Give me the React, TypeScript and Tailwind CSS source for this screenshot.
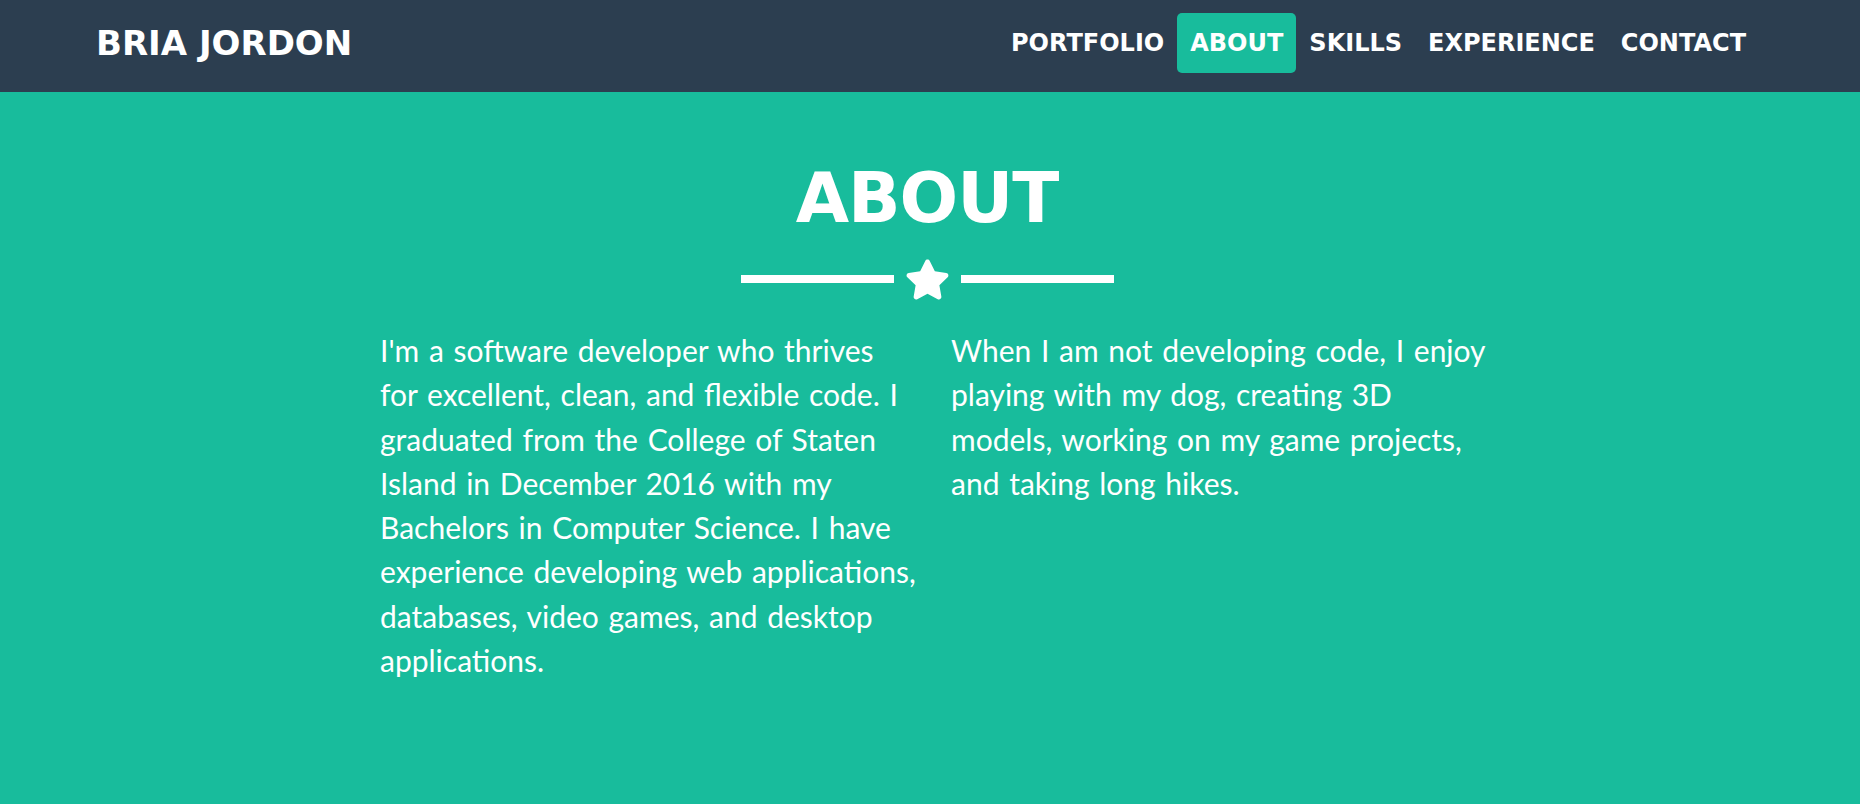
import { FaStar } from 'react-icons/fa';

const links = ['Portfolio', 'About', 'Skills', 'Experience', 'Contact'];

export default function App() {
  const heading = { fontFamily: '"DejaVu Sans", "Liberation Sans", sans-serif' };
  const body = { fontFamily: 'Lato, "Liberation Sans", sans-serif' };

  return (
    <div className="min-h-[804px] bg-[#18bc9c]">
      <nav className="h-[92px] bg-[#2c3e50] pl-[96px] pr-[101px] pt-[13px] flex justify-between" style={heading}>
        <a className="h-[60px] flex items-center text-white font-bold text-[34px] uppercase leading-none">
          Bria Jordon
        </a>
        <ul className="flex">
          {links.map(link => (
            <li key={link}>
              <a
                className={`h-[60px] px-[13px] flex items-center rounded-[5px] text-white font-bold text-[24px] uppercase leading-none ${
                  link === 'About' ? 'bg-[#18bc9c]' : ''
                }`}
              >
                {link}
              </a>
            </li>
          ))}
        </ul>
      </nav>

      <section className="pt-[72px] pr-[6px] text-white">
        <h2 className="text-center font-bold text-[69px] leading-none tracking-[-1px] uppercase" style={heading}>
          About
        </h2>
        <div className="mt-[24px] h-[44px] flex items-center justify-center gap-[11px]">
          <div className="w-[153px] h-[8px] bg-white"></div>
          <FaStar size={45} />
          <div className="w-[153px] h-[8px] bg-white"></div>
        </div>

        <div className="mt-[27px] grid grid-cols-[571px_571px] justify-center pl-[18px]" style={body}>
          <p className="pl-[15px] w-[555px] text-[30px] leading-[44.3px] [word-spacing:2px]">
            I'm a software developer who thrives for excellent, clean, and flexible code. I graduated from the
            College of Staten Island in December 2016 with my Bachelors in Computer Science. I have experience
            developing web applications, databases, video games, and desktop applications.
          </p>
          <p className="pl-[15px] w-[555px] text-[30px] leading-[44.3px] [word-spacing:2px]">
            When I am not developing code, I enjoy playing with my dog, creating 3D models, working on my game
            projects, and taking long hikes.
          </p>
        </div>
      </section>
    </div>
  );
}
